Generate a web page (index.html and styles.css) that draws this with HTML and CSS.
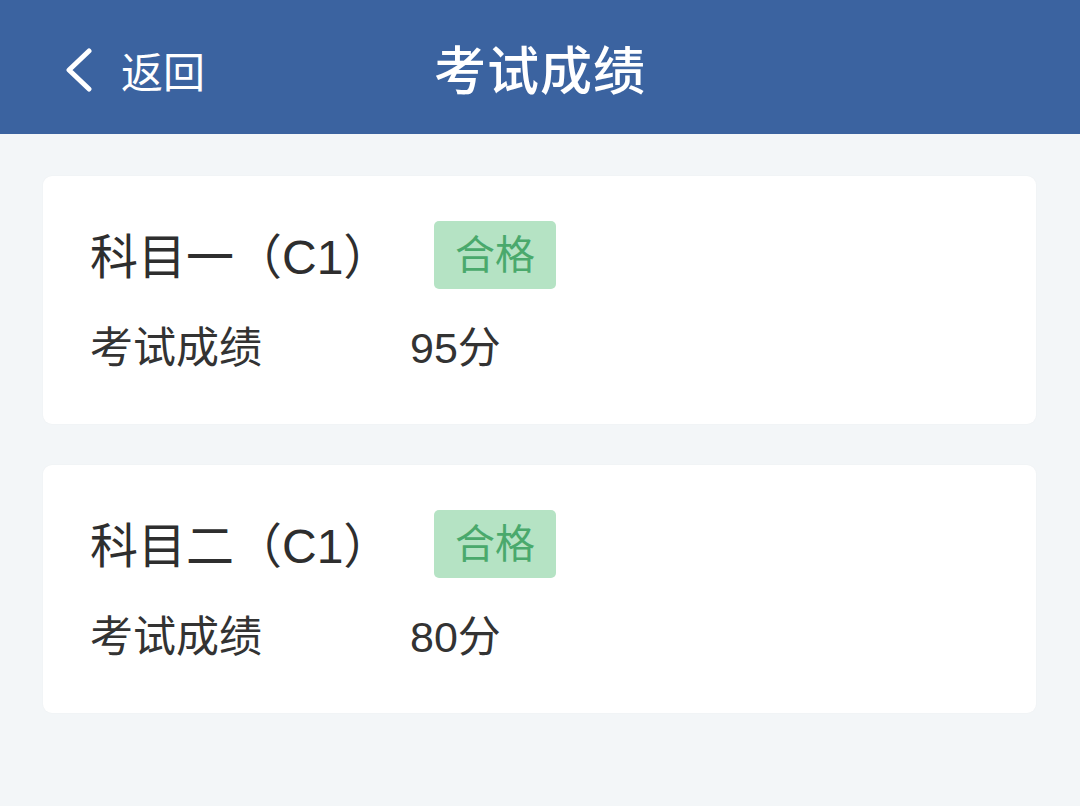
FILE: index.html
```html
<!DOCTYPE html>
<html lang="zh">
<head>
<meta charset="utf-8">
<link rel="stylesheet" href="styles.css">
</head>
<body>
<header class="nav">
  <div class="back">
    <svg class="chev" width="32" height="44" viewBox="0 0 32 44"><path d="M27 3 L7 22 L27 41" fill="none" stroke="#fff" stroke-width="5" stroke-linecap="round" stroke-linejoin="round"/></svg>
    <span class="back-text">返回</span>
  </div>
  <div class="title">考试成绩</div>
</header>
<main class="list">
  <section class="card">
    <div class="head">
      <span class="subject">科目一（C1）</span>
      <span class="badge">合格</span>
    </div>
    <div class="row">
      <span class="label">考试成绩</span>
      <span class="value">95分</span>
    </div>
  </section>
  <section class="card">
    <div class="head">
      <span class="subject">科目二（C1）</span>
      <span class="badge">合格</span>
    </div>
    <div class="row">
      <span class="label">考试成绩</span>
      <span class="value">80分</span>
    </div>
  </section>
</main>
</body>
</html>
```
FILE: styles.css
```css
html, body {
  margin: 0;
  padding: 0;
}
body {
  width: 1080px;
  height: 806px;
  background: #f3f6f8;
  font-family: "Noto Sans CJK SC", "Noto Sans", sans-serif;
  overflow: hidden;
}
.nav {
  height: 134px;
  background: #3b63a0;
  position: relative;
  display: flex;
  align-items: center;
  justify-content: center;
}
.back {
  position: absolute;
  left: 62px;
  top: 0;
  height: 134px;
  display: flex;
  align-items: center;
  color: #fff;
}
.chev {
  margin-top: 6px;
}
.back-text {
  font-size: 42px;
  margin-left: 27px;
  margin-top: 4px;
}
.title {
  color: #fff;
  font-size: 52px;
  font-weight: 500;
  margin-top: 0;
  letter-spacing: 1px;
}
.list {
  padding: 42px 44px 0 43px;
  display: flex;
  flex-direction: column;
  gap: 41px;
}
.card {
  background: #fff;
  border-radius: 9px;
  height: 248px;
  box-sizing: border-box;
  padding: 45px 0 0 47px;
  box-shadow: 0 0 2px rgba(0,0,0,0.04);
}
.head {
  display: flex;
  align-items: center;
  height: 68px;
}
.subject {
  font-family: "Liberation Sans", "Noto Sans CJK SC", sans-serif;
  font-size: 48px;
  color: #2e2e2e;
  width: 344px;
  white-space: nowrap;
  margin-top: -4px;
}
.badge {
  background: #b5e3c4;
  color: #4aa96c;
  font-size: 40px;
  width: 122px;
  height: 68px;
  border-radius: 5px;
  display: flex;
  align-items: center;
  justify-content: center;
  line-height: 1;
  padding-bottom: 6px;
  box-sizing: border-box;
}
.row {
  display: flex;
  align-items: center;
  margin-top: 24px;
  font-size: 43px;
  color: #333;
}
.label {
  width: 320px;
}
.value {
  font-family: "Liberation Sans", "Noto Sans CJK SC", sans-serif;
}
```
